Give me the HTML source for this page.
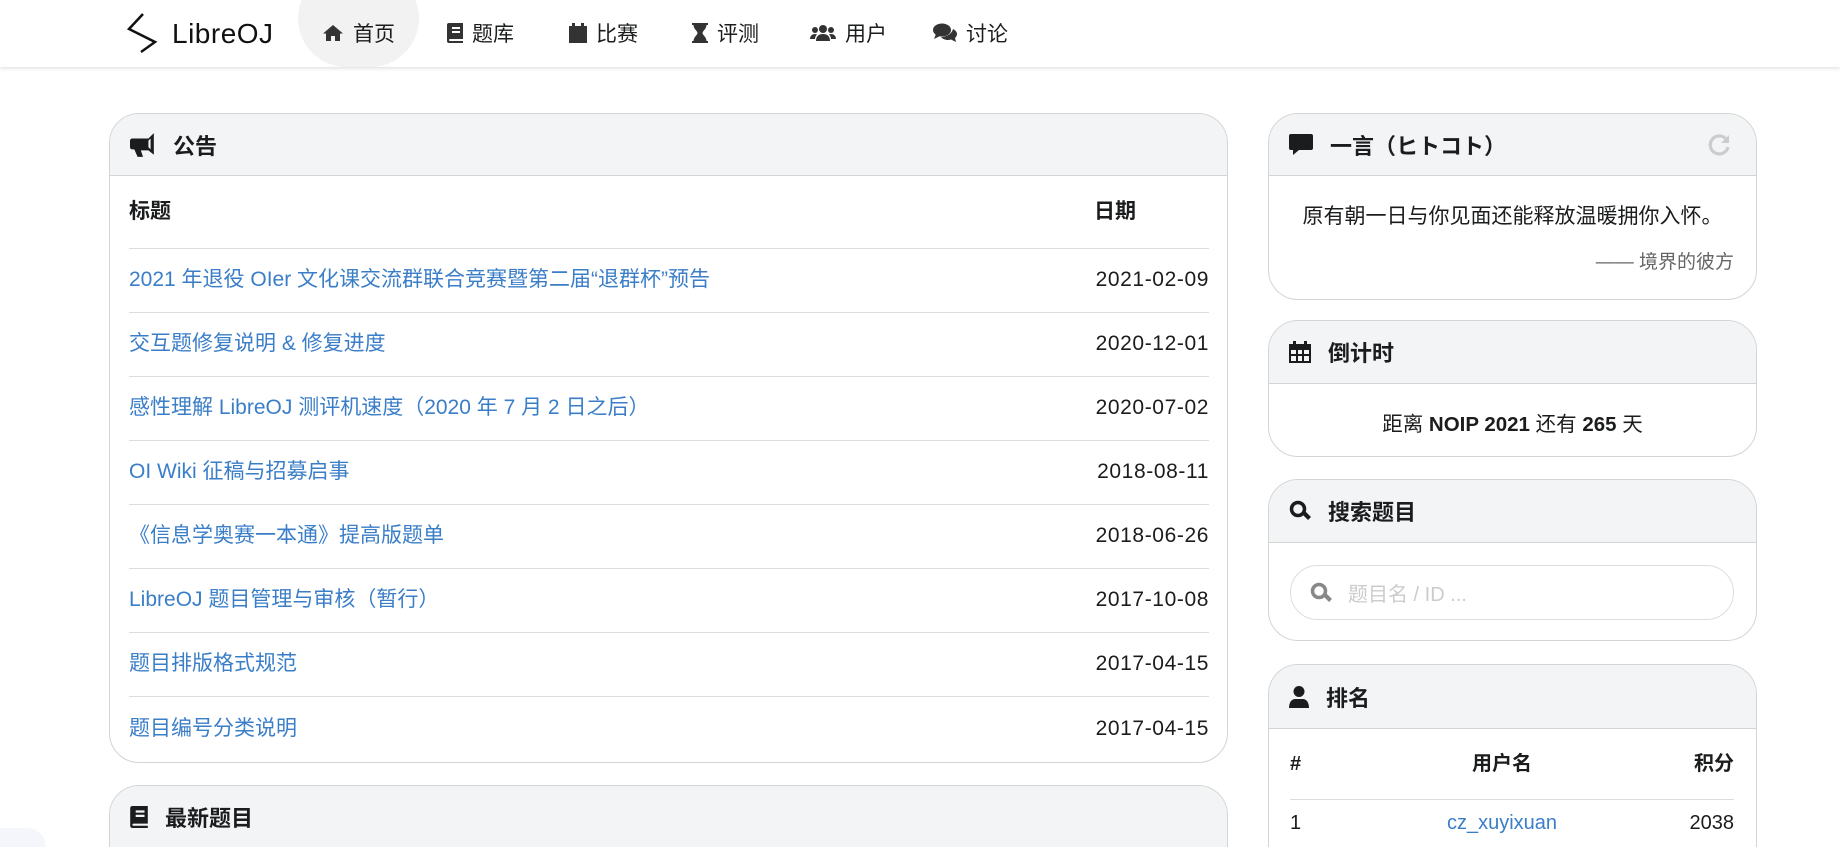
<!DOCTYPE html>
<html><head><meta charset="utf-8"><style>
*{box-sizing:border-box;margin:0;padding:0}
html,body{width:1840px;height:847px;overflow:hidden}
body{background:#fff;font-family:"Liberation Sans","Noto Sans CJK SC",sans-serif;color:#1b1c1d;position:relative}
#wrap{position:absolute;left:0;top:0;width:1840px;height:847px;overflow:hidden}
.nav{position:absolute;left:0;top:0;width:1840px;height:67px;background:#fff;box-shadow:0 1px 4px rgba(0,0,0,.15);z-index:2}
.logo{position:absolute;left:127px;top:12px}
.logotxt{position:absolute;left:172px;top:18px;font-size:28px;font-weight:500;letter-spacing:.5px;color:#111}
.pill{position:absolute;left:298px;top:-30px;width:121px;height:97px;background:#f2f2f2;border-radius:60px}
.ni{position:absolute;top:19px;font-size:21px;color:#1b1c1d;display:flex;align-items:center;gap:9px;height:28px}
.ni svg{fill:#333}
.card{position:absolute;border:1px solid #d4d4d5;border-radius:30px;background:#fff;overflow:hidden}
.open{border-bottom:none;border-bottom-left-radius:0;border-bottom-right-radius:0}
.ch{background:#f3f4f5;border-bottom:1px solid #d4d4d5;height:62px;display:flex;align-items:center;padding-left:20px;font-size:22px;font-weight:bold;gap:17px}
.ch svg{fill:#1b1c1d}
table{border-collapse:collapse;font-size:21px}
td,th{text-align:left;vertical-align:middle;line-height:1.2}
td.d{text-align:right;letter-spacing:.6px}
a{color:#3a7ec8;text-decoration:none}
</style></head><body><div id="wrap">
<div class="nav">
  <svg class="logo" width="32" height="42" viewBox="0 0 32 42"><polyline points="16,2 2,17 28,30 14,40" fill="none" stroke="#111" stroke-width="2.5"/></svg>
  <div class="logotxt">LibreOJ</div>
  <div class="pill"></div>
  <div class="ni" style="left:322px"><svg width="22" height="18" viewBox="0 0 22 18"><path d="M11 1L1 9.5h3V17h5v-5h4v5h5V9.5h3z"/></svg>首页</div>
  <div class="ni" style="left:447px"><svg width="16" height="20" viewBox="0 0 16 20"><path d="M2 0h14v16H3a1 1 0 000 2h13v2H2a2 2 0 01-2-2V2a2 2 0 012-2zm3 4v2h8V4zm0 4v2h8V8z"/></svg>题库</div>
  <div class="ni" style="left:569px"><svg width="18" height="20" viewBox="0 0 18 20"><path d="M3 0h3v3h6V0h3v3h3v17H0V3h3z"/></svg>比赛</div>
  <div class="ni" style="left:692px"><svg width="16" height="20" viewBox="0 0 16 20"><path d="M0 0h16v2h-1.5c0 4-4 6-4 8s4 4 4 8H16v2H0v-2h1.5c0-4 4-6 4-8s-4-4-4-8H0z"/></svg>评测</div>
  <div class="ni" style="left:810px"><svg width="26" height="18" viewBox="0 0 26 18"><circle cx="13" cy="5" r="4"/><circle cx="5" cy="6" r="3"/><circle cx="21" cy="6" r="3"/><path d="M6 17c0-5 3-7 7-7s7 2 7 7zM0 15c0-3 2-5 5-5 1 0 2 .5 2 .5C5.5 12 5 13.5 5 15zM26 15c0-3-2-5-5-5-1 0-2 .5-2 .5 1.5 1.5 2 3 2 4.5z"/></svg>用户</div>
  <div class="ni" style="left:933px"><svg width="24" height="20" viewBox="0 0 24 20"><ellipse cx="9" cy="7" rx="9" ry="6.5"/><path d="M3 11l-2 5 6-3z"/><path d="M20 6c2.5 1.2 4 3 4 5 0 1.8-1 3-2 4l1 4-5-2.5c-1 .3-2 .5-3 .5-3 0-5.5-1.2-7-3 6 0 11-3.5 12-8z"/></svg>讨论</div>
</div>

<div class="card" style="left:109px;top:113px;width:1119px;height:650px">
  <div class="ch"><svg width="26" height="24" viewBox="0 0 24 22"><path d="M22 0v20l-5-4H10l2 6H7L4 15H2a2 2 0 01-2-2V7a2 2 0 012-2h15zM19 5l-2 2v6l2 2z"/></svg>公告</div>
  <table style="position:absolute;left:19px;top:62px;width:1080px">
    <tr style="height:72px"><th>标题</th><th style="width:115px">日期</th></tr>
    <tr style="height:64px;border-top:1px solid #ddd"><td><a>2021 年退役 OIer 文化课交流群联合竞赛暨第二届“退群杯”预告</a></td><td class="d">2021-02-09</td></tr>
    <tr style="height:64px;border-top:1px solid #ddd"><td><a>交互题修复说明 &amp; 修复进度</a></td><td class="d">2020-12-01</td></tr>
    <tr style="height:64px;border-top:1px solid #ddd"><td><a>感性理解 LibreOJ 测评机速度（2020 年 7 月 2 日之后）</a></td><td class="d">2020-07-02</td></tr>
    <tr style="height:64px;border-top:1px solid #ddd"><td><a>OI Wiki 征稿与招募启事</a></td><td class="d">2018-08-11</td></tr>
    <tr style="height:64px;border-top:1px solid #ddd"><td><a>《信息学奥赛一本通》提高版题单</a></td><td class="d">2018-06-26</td></tr>
    <tr style="height:64px;border-top:1px solid #ddd"><td><a>LibreOJ 题目管理与审核（暂行）</a></td><td class="d">2017-10-08</td></tr>
    <tr style="height:64px;border-top:1px solid #ddd"><td><a>题目排版格式规范</a></td><td class="d">2017-04-15</td></tr>
    <tr style="height:64px;border-top:1px solid #ddd"><td><a>题目编号分类说明</a></td><td class="d">2017-04-15</td></tr>
  </table>
</div>

<div class="card open" style="left:109px;top:785px;width:1119px;height:62px">
  <div class="ch" style="border-bottom:none"><svg width="18" height="22" viewBox="0 0 16 20"><path d="M2 0h14v16H3a1 1 0 000 2h13v2H2a2 2 0 01-2-2V2a2 2 0 012-2zm3 4v2h8V4zm0 4v2h8V8z"/></svg>最新题目</div>
</div>

<div class="card" style="left:1268px;top:113px;width:489px;height:187px">
  <div class="ch" style="position:relative"><svg width="24" height="22" viewBox="0 0 24 22"><path d="M2 0h20a2 2 0 012 2v12a2 2 0 01-2 2H10l-6 5v-5H2a2 2 0 01-2-2V2a2 2 0 012-2z"/></svg>一言（ヒトコト）
    <svg style="position:absolute;right:26px;top:20px" width="22" height="22" viewBox="0 0 22 22"><path d="M18 5A9 9 0 1020 13" fill="none" stroke="#ccc" stroke-width="3.2"/><path d="M21 1v8h-8z" fill="#ccc"/></svg></div>
  <div style="text-align:center;font-size:21px;margin-top:24px">原有朝一日与你见面还能释放温暖拥你入怀。</div>
  <div style="text-align:right;font-size:19px;color:#666;margin-top:17px;padding-right:22px">—— 境界的彼方</div>
</div>

<div class="card" style="left:1268px;top:320px;width:489px;height:137px">
  <div class="ch" style="height:63px"><svg width="22" height="22" viewBox="0 0 22 22"><path d="M4 0h3v3h8V0h3v3h4v19H0V3h4zM2 9v4h5V9zm7 0v4h4V9zm6 0v4h5V9zM2 15v5h5v-5zm7 0v5h4v-5zm6 0v5h5v-5z"/></svg>倒计时</div>
  <div style="text-align:center;font-size:20.5px;margin-top:23px">距离 <b>NOIP 2021</b> 还有 <b>265</b> 天</div>
</div>

<div class="card" style="left:1268px;top:479px;width:489px;height:162px">
  <div class="ch" style="height:63px"><svg width="22" height="22" viewBox="0 0 22 22"><circle cx="9" cy="9" r="6.5" fill="none" stroke="#1b1c1d" stroke-width="3.5"/><path d="M13 14l3-3 6 6-3 3z"/></svg>搜索题目</div>
  <div style="position:absolute;left:21px;top:85px;width:444px;height:55px;border:1px solid #ddd;border-radius:28px;display:flex;align-items:center;padding-left:19px;gap:16px;font-size:20px;color:#ccc">
    <svg width="22" height="22" viewBox="0 0 22 22"><circle cx="9" cy="9" r="6.5" fill="none" stroke="#888" stroke-width="3.5"/><path d="M13 14l3-3 6 6-3 3z" fill="#888"/></svg>题目名 / ID ...</div>
</div>

<div class="card open" style="left:1268px;top:664px;width:489px;height:183px">
  <div class="ch" style="height:64px"><svg width="20" height="22" viewBox="0 0 20 22"><circle cx="10" cy="5.5" r="5.5"/><path d="M0 22c0-6 3-9 6-9h8c3 0 6 3 6 9z"/></svg>排名</div>
  <table style="position:absolute;left:21px;top:64px;width:444px;font-size:20px">
    <tr style="height:70px"><th style="width:60px">#</th><th style="text-align:center">用户名</th><th style="text-align:right;width:80px">积分</th></tr>
    <tr style="height:48px;border-top:1px solid #ddd"><td>1</td><td style="text-align:center"><a>cz_xuyixuan</a></td><td style="text-align:right">2038</td></tr>
  </table>
</div>

<div style="position:absolute;left:0;top:828px;width:46px;height:19px;border-top-right-radius:40px;background:#f4f6fb"></div>
</div></body></html>
